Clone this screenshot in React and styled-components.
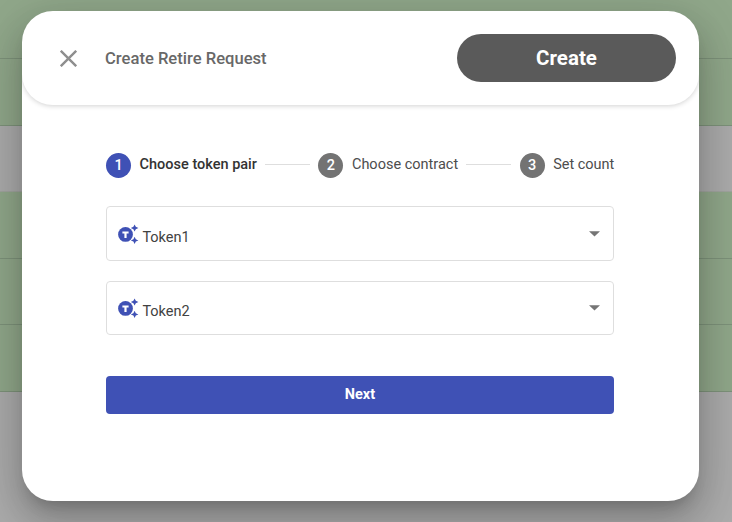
import React from "react";
import styled, { createGlobalStyle } from "styled-components";

const GlobalStyle = createGlobalStyle`
  * { box-sizing: border-box; }
  body { margin: 0; overflow: hidden; font-family: Roboto, sans-serif; }
`;

const Page = styled.div`
  display: grid;
  width: 732px;
  height: 522px;
  overflow: hidden;
  background: #ababab;
`;

const Rows = styled.div`
  grid-area: 1 / 1;
  display: flex;
  flex-direction: column;
`;

const Row = styled.div`
  flex: none;
  height: ${(p) => p.$height}px;
  background: ${(p) => (p.$plain ? "#ababab" : "#90a78a")};
  border-bottom: 1px solid ${(p) => (p.$plain ? "#a0a49e" : "#7d927a")};
`;

const Dialog = styled.section`
  grid-area: 1 / 1;
  z-index: 1;
  width: 677px;
  height: 490px;
  margin: 11px 0 0 22px;
  border-radius: 31px;
  background: #fff;
  overflow: hidden;
  box-shadow: 0 11px 15px -7px rgba(0, 0, 0, 0.2),
    0 24px 38px 3px rgba(0, 0, 0, 0.14), 0 9px 46px 8px rgba(0, 0, 0, 0.12);
`;

const Header = styled.header`
  display: flex;
  align-items: center;
  height: 94px;
  padding: 0 23px 0 38px;
  border-radius: 31px;
  box-shadow: 0 1px 5px rgba(0, 0, 0, 0.18);
`;

const CloseButton = styled.button`
  display: flex;
  padding: 0;
  border: 0;
  background: none;
`;

const Title = styled.h1`
  flex: 1;
  margin: 1px 0 0 28px;
  font-size: 16.6px;
  font-weight: 500;
  line-height: 24px;
  color: #686868;
`;

const CreateButton = styled.button`
  width: 219px;
  height: 48px;
  padding: 0;
  border: 0;
  border-radius: 24px;
  background: #5a5a5a;
  color: #fff;
  font: 700 20.5px/48px Roboto, sans-serif;
`;

const Body = styled.main`
  display: flex;
  flex-direction: column;
  padding: 47px 84px 0;
`;

const Stepper = styled.div`
  display: flex;
  align-items: center;
  height: 26px;
  margin-bottom: 28px;
`;

const StepNumber = styled.span`
  flex: none;
  width: 25px;
  height: 25px;
  margin-right: 8.6px;
  border-radius: 50%;
  background: ${(p) => (p.$active ? "#3f51b5" : "#737373")};
  color: #fff;
  font-size: 14.5px;
  font-weight: 500;
  line-height: 25px;
  text-align: center;
`;

const StepLabel = styled.span`
  width: ${(p) => p.$width}px;
  margin-top: -1px;
  white-space: nowrap;
  font-size: 14.5px;
  line-height: 20px;
  font-weight: ${(p) => (p.$active ? 500 : 400)};
  color: ${(p) => (p.$active ? "#333" : "#4d4d4d")};
`;

const StepLine = styled.span`
  flex: none;
  width: 45px;
  height: 1px;
  margin: 0 8.4px 2px 8px;
  background: #dedede;
`;

const Select = styled.div`
  display: flex;
  align-items: center;
  width: 508px;
  height: ${(p) => p.$height}px;
  margin-bottom: 20px;
  padding: 0 13px 0 11px;
  border: 1px solid #dedede;
  border-radius: 4px;
`;

const Value = styled.span`
  flex: 1;
  margin: ${(p) => p.$top}px 0 0 3.4px;
  font-size: 14.5px;
  line-height: 20px;
  color: #424242;
`;

const NextButton = styled.button`
  width: 508px;
  height: 38px;
  margin-top: 21px;
  padding: 0 0 1px;
  border: 0;
  border-radius: 4px;
  background: #3f51b5;
  color: #fff;
  font: 700 14.5px/37px Roboto, sans-serif;
`;

const Icon = styled.svg`
  display: block;
  flex: none;
`;

const TokenIcon = () => (
  <Icon width="21" height="20" viewBox="0 0 21 20" fill="#3f51b5">
    <circle cx="7.5" cy="10.4" r="7.4" />
    <path d="M4.4 7.4h6.2v2H8.6v4.6H6.4V9.4h-2z" fill="#fff" />
    <path d="M16.6 .4l1.2 2.4 2.6 1.2-2.6 1.2-1.2 2.4-1.2-2.4-2.6-1.2 2.6-1.2z" />
    <path d="M16.6 12.8l1.2 2.4 2.6 1.2-2.6 1.2-1.2 2.4-1.2-2.4-2.6-1.2 2.6-1.2z" />
  </Icon>
);

const TokenSelect = ({ name, height, textTop }) => (
  <Select $height={height}>
    <TokenIcon />
    <Value $top={textTop}>{name}</Value>
    <Icon width="11" height="6" viewBox="0 0 11 6">
      <path d="M0 .3h11L5.5 5.6z" fill="#757575" />
    </Icon>
  </Select>
);

const steps = [
  { label: "Choose token pair", width: 117.4 },
  { label: "Choose contract", width: 106.4 },
  { label: "Set count", width: 62 },
];

const rows = [
  { height: 59 },
  { height: 67 },
  { height: 66, plain: true },
  { height: 67 },
  { height: 66 },
  { height: 67 },
];

export default function App() {
  return (
    <Page>
      <GlobalStyle />
      <Rows>
        {rows.map((r, i) => (
          <Row key={i} $height={r.height} $plain={r.plain} />
        ))}
      </Rows>
      <Dialog>
        <Header>
          <CloseButton aria-label="Close">
            <Icon width="17" height="17" viewBox="0 0 17 17">
              <path d="M.8 .8l15.4 15.4M16.2 .8L.8 16.2" stroke="#8f8f8f" strokeWidth="2.4" />
            </Icon>
          </CloseButton>
          <Title>Create Retire Request</Title>
          <CreateButton>Create</CreateButton>
        </Header>
        <Body>
          <Stepper>
            {steps.map((s, i) => (
              <React.Fragment key={s.label}>
                {i > 0 && <StepLine />}
                <StepNumber $active={i === 0}>{i + 1}</StepNumber>
                <StepLabel $active={i === 0} $width={s.width}>{s.label}</StepLabel>
              </React.Fragment>
            ))}
          </Stepper>
          <TokenSelect name="Token1" height={55} textTop={8} />
          <TokenSelect name="Token2" height={54} textTop={7} />
          <NextButton>Next</NextButton>
        </Body>
      </Dialog>
    </Page>
  );
}
